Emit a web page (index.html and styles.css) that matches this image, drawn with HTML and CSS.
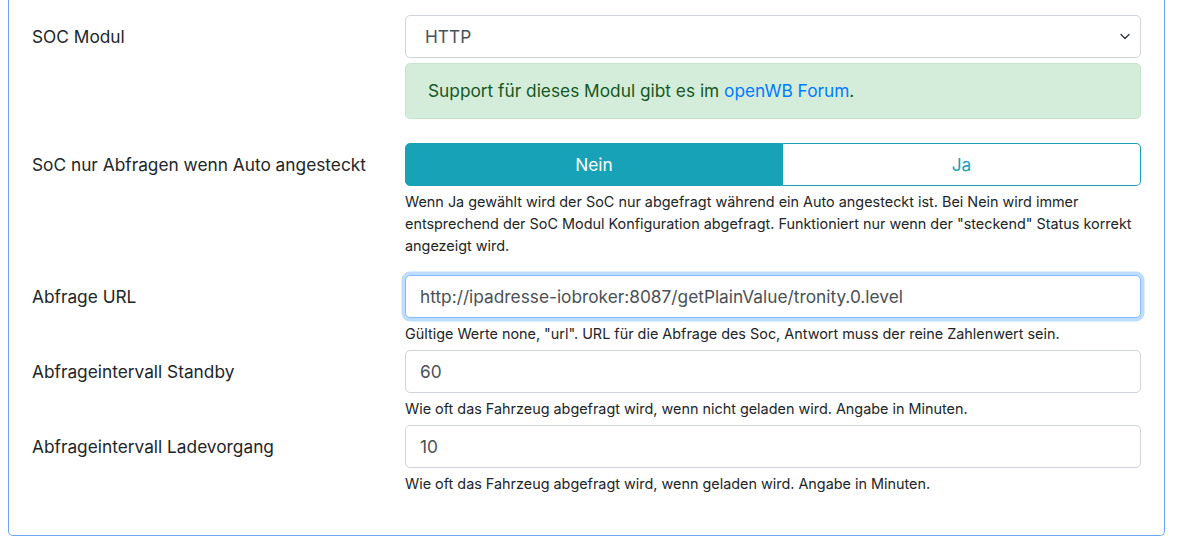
FILE: index.html
```html
<!DOCTYPE html>
<html lang="de">
<head>
<meta charset="utf-8">
<title>SOC Modul</title>
<link rel="stylesheet" href="styles.css">
</head>
<body>
<div class="card">
  <div class="row row-1">
    <div class="label">SOC Modul</div>
    <div class="field">
      <div class="select-box">
        <span>HTTP</span>
        <svg class="chevron" width="10" height="7" viewBox="0 0 10 7"><path d="M1 1.5 L5 5.5 L9 1.5" fill="none" stroke="#343a40" stroke-width="1.4" stroke-linecap="round" stroke-linejoin="round"/></svg>
      </div>
      <div class="alert">Support für dieses Modul gibt es im <a href="#">openWB Forum</a>.</div>
    </div>
  </div>
  <div class="row row-2">
    <div class="label">SoC nur Abfragen wenn Auto angesteckt</div>
    <div class="field">
      <div class="btn-group">
        <button class="btn btn-active">Nein</button>
        <button class="btn btn-outline">Ja</button>
      </div>
      <div class="help">Wenn Ja gewählt wird der SoC nur abgefragt während ein Auto angesteckt ist. Bei Nein wird immer entsprechend der SoC Modul Konfiguration abgefragt. Funktioniert nur wenn der "steckend" Status korrekt angezeigt wird.</div>
    </div>
  </div>
  <div class="row row-3">
    <div class="label">Abfrage URL</div>
    <div class="field">
      <input class="input input-focus" type="text" value="http://ipadresse-iobroker:8087/getPlainValue/tronity.0.level">
      <div class="help">Gültige Werte none, "url". URL für die Abfrage des Soc, Antwort muss der reine Zahlenwert sein.</div>
    </div>
  </div>
  <div class="row row-4">
    <div class="label">Abfrageintervall Standby</div>
    <div class="field">
      <input class="input" type="text" value="60">
      <div class="help">Wie oft das Fahrzeug abgefragt wird, wenn nicht geladen wird. Angabe in Minuten.</div>
    </div>
  </div>
  <div class="row row-5">
    <div class="label">Abfrageintervall Ladevorgang</div>
    <div class="field">
      <input class="input" type="text" value="10">
      <div class="help">Wie oft das Fahrzeug abgefragt wird, wenn geladen wird. Angabe in Minuten.</div>
    </div>
  </div>
</div>
</body>
</html>
```
FILE: styles.css
```css
* { box-sizing: border-box; }
html, body { margin: 0; padding: 0; background: #fff; }
body {
  font-family: Inter, "Liberation Sans", Arial, sans-serif;
  color: #212529;
  font-size: 17.3px;
  line-height: 27px;
}
.card {
  margin: 0 35px 0 8px;
  border: 1px solid #6ea6f7;
  border-top: 0;
  border-radius: 0 0 5px 5px;
  padding: 15px 23px 40px 23px;
}
.row {
  display: grid;
  grid-template-columns: 373px 1fr;
}
.row-1 { margin-bottom: 24px; }
.row-2 { margin-bottom: 18px; }
.row-3 { margin-bottom: 5px; }
.row-4 { margin-bottom: 5px; }
.label {
  padding-top: 8px;
  font-size: 17.3px;
  line-height: 27px;
}
.field { display: flex; flex-direction: column; }
.select-box {
  height: 43px;
  border: 1px solid #ced4da;
  border-radius: 5px;
  display: flex;
  align-items: center;
  justify-content: space-between;
  padding: 0 10px 0 19px;
  color: #495057;
}
.chevron { display: block; }
.alert {
  margin-top: 5px;
  height: 56px;
  background: #d4edda;
  border: 1px solid #c3e6cb;
  border-radius: 5px;
  color: #155724;
  padding: 13px 22px;
  line-height: 28px;
}
.alert a { color: #007bff; text-decoration: none; }
.btn-group { display: flex; height: 43px; }
.btn {
  font: inherit;
  font-size: 17.3px;
  border: 1px solid #17a2b8;
  margin: 0;
  padding: 0;
}
.btn-active {
  flex: 0 0 378px;
  background: #17a2b8;
  color: #fff;
  border-radius: 5px 0 0 5px;
}
.btn-outline {
  flex: 1 1 auto;
  background: #fff;
  color: #17a2b8;
  border-radius: 0 5px 5px 0;
  border-left: 0;
}
.help {
  margin-top: 5px;
  font-size: 14.4px;
  line-height: 22px;
  color: #212529;
}
.input {
  height: 43px;
  width: 100%;
  font: inherit;
  font-size: 17.3px;
  color: #495057;
  border: 1px solid #ced4da;
  border-radius: 5px;
  padding: 0 14px;
  background: #fff;
  outline: none;
}
.input-focus {
  border-color: #80bdff;
  box-shadow: 0 0 0 3.5px rgba(0, 123, 255, 0.25);
}
```
